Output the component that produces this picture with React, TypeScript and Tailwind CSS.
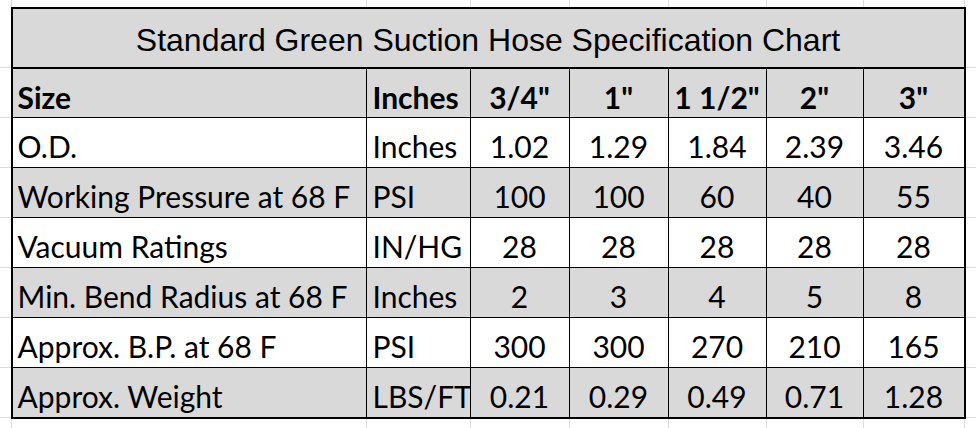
const rows: string[][] = [
  ['O.D.', 'Inches', '1.02', '1.29', '1.84', '2.39', '3.46'],
  ['Working Pressure at 68 F', 'PSI', '100', '100', '60', '40', '55'],
  ['Vacuum Ratings', 'IN/HG', '28', '28', '28', '28', '28'],
  ['Min. Bend Radius at 68 F', 'Inches', '2', '3', '4', '5', '8'],
  ['Approx. B.P. at 68 F', 'PSI', '300', '300', '270', '210', '165'],
  ['Approx. Weight', 'LBS/FT', '0.21', '0.29', '0.49', '0.71', '1.28'],
];

const header = ['Size', 'Inches', '3/4"', '1"', '1 1/2"', '2"', '3"'];

// excel gridlines peeking out around the table
const tickCols = ['w-[355px]', 'w-[104px]', 'w-[99px]', 'w-[99px]', 'w-[98px]', 'w-[97px]', 'w-[101px]', 'w-[12px]'];
const tickRows = ['h-[61px]', 'h-[50px]', 'h-[50px]', 'h-[50px]', 'h-[50px]', 'h-[50px]', 'h-[50px]', 'h-[50px]'];

function TickStrip({ height }: { height: string }) {
  return (
    <div className={`flex ${height}`}>
      <div className="w-[11px]" />
      {tickCols.map((w, i) => (
        <div key={i} className={`${w} border-l border-[#dcdcdc]`} />
      ))}
    </div>
  );
}

function SideStrip() {
  return (
    <div className="flex w-[11px] flex-col">
      {tickRows.map((h, i) => (
        <div key={i} className={`${h} border-b border-[#dcdcdc]`} />
      ))}
    </div>
  );
}

function cellClass(col: number, isLast: boolean, gray: boolean) {
  const border = `${col < 6 ? 'border-r' : ''} ${isLast ? '' : 'border-b'}`;
  const align = col < 2 ? 'justify-start' : 'justify-center';
  const pad = col === 0 ? 'pl-[5px]' : col === 1 ? 'pl-[6px]' : '';
  return `flex items-end ${align} ${pad} ${border} border-black ${gray ? 'bg-[#d9d9d9]' : 'bg-white'}`;
}

export default function App() {
  return (
    <div className="flex h-[428px] w-[976px] flex-col bg-white text-black">
      <TickStrip height="h-[7px]" />
      <div className="flex">
        <SideStrip />
        <div className="w-[955px] border-2 border-black">
          <div className="grid grid-cols-[354px_104px_99px_99px_98px_97px_100px] font-['Lato',sans-serif] text-[30px] leading-[30px]">
            {/* title */}
            <div className="col-span-7 flex h-[60px] items-center justify-center border-b-2 border-black bg-[#d9d9d9] pt-[3px] font-['Liberation_Sans',Arial,sans-serif] text-[32px] leading-[32px]">
              Standard Green Suction Hose Specification Chart
            </div>

            {/* column headers */}
            {header.map((h, c) => (
              <div key={h} className={`h-[49px] pb-[5px] font-bold ${cellClass(c, false, true)}`}>
                {h}
              </div>
            ))}

            {/* data */}
            {rows.map((r, ri) =>
              r.map((v, c) => {
                const last = ri === rows.length - 1;
                return (
                  <div
                    key={`${ri}-${c}`}
                    className={`${last ? 'h-[49px]' : 'h-[50px]'} pb-[6px] ${cellClass(c, last, ri % 2 === 1)}`}
                  >
                    {v}
                  </div>
                );
              })
            )}
          </div>
        </div>
        <SideStrip />
      </div>
      <TickStrip height="h-[9px]" />
    </div>
  );
}
